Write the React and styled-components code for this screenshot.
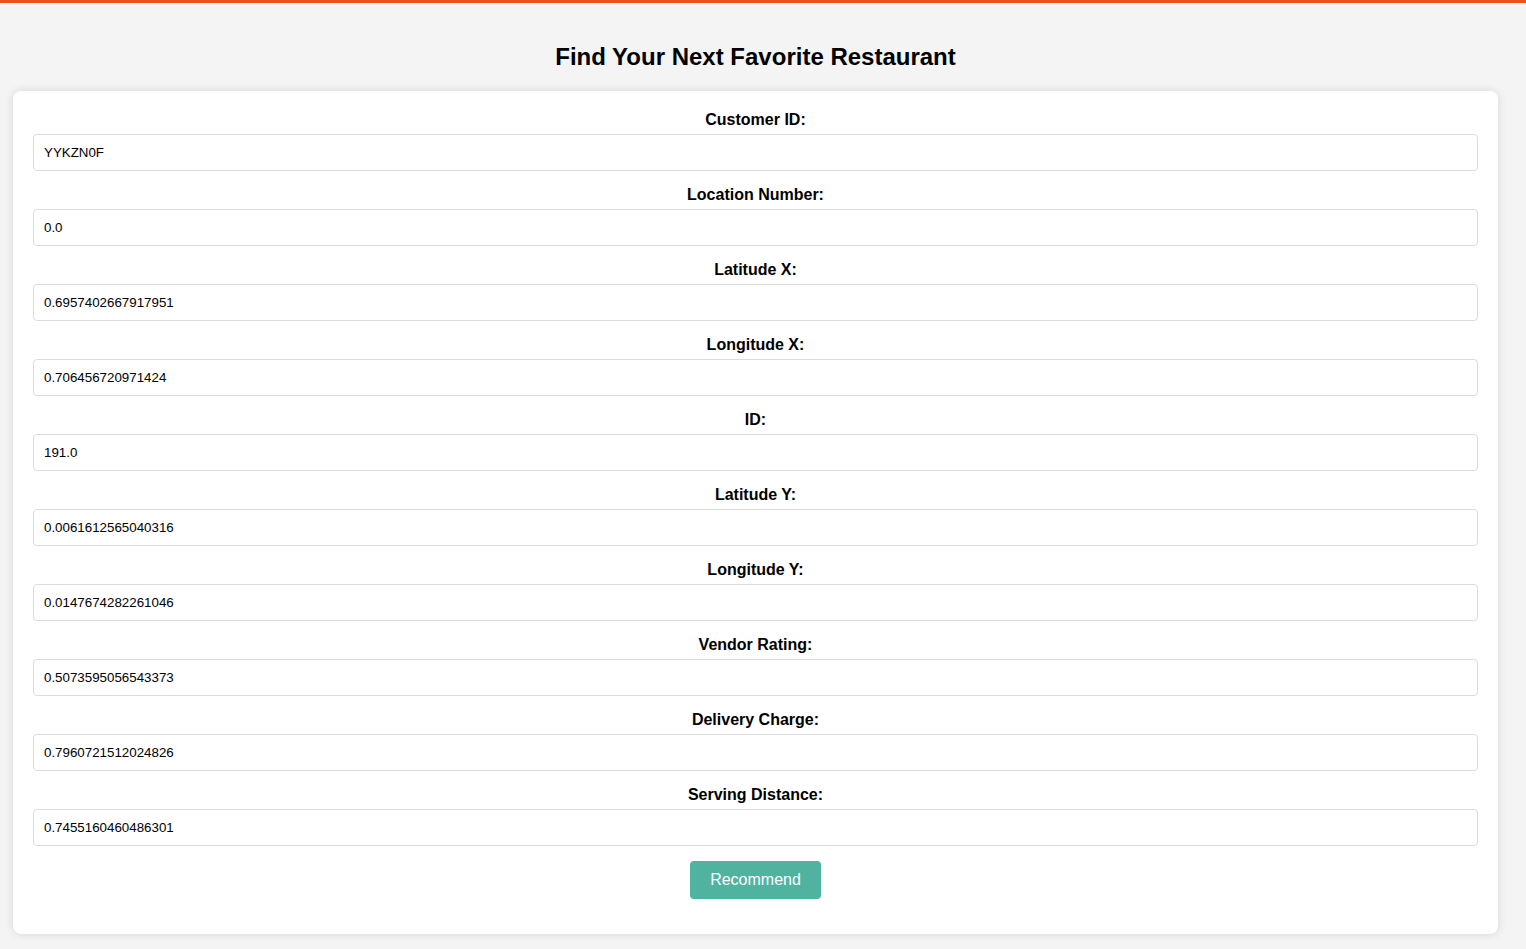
import React from "react";
import styled, { createGlobalStyle } from "styled-components";

const Global = createGlobalStyle`
  html, body { margin: 0; padding: 0; }
  body {
    background: #f4f4f4;
    border-top: 3px solid #f04e23;
    font-family: "Liberation Sans", Arial, sans-serif;
    color: #000;
  }
  * { box-sizing: border-box; }
`;

const Page = styled.div`
  padding: 0 28px 15px 13px;
`;

const Title = styled.h1`
  margin: 0;
  padding-top: 40px;
  height: 88px;
  font-size: 24px;
  line-height: 28px;
  font-weight: bold;
  text-align: center;
`;

const Card = styled.form`
  background: #fff;
  border-radius: 8px;
  box-shadow: 0 0 10px rgba(0, 0, 0, 0.12);
  padding: 20px 20px 35px;
  display: flex;
  flex-direction: column;
  align-items: stretch;
`;

const Field = styled.div`
  display: flex;
  flex-direction: column;
  margin-bottom: 15px;
`;

const Label = styled.label`
  display: block;
  text-align: center;
  font-weight: bold;
  font-size: 16px;
  line-height: 18px;
  margin-bottom: 5px;
`;

const Input = styled.input`
  height: 37px;
  border: 1px solid #dcdcdc;
  border-radius: 4px;
  padding: 0 10px;
  font-family: "Liberation Sans", Arial, sans-serif;
  font-size: 13.333px;
  color: #000;
  background: #fff;
  outline: none;
`;

const Button = styled.button`
  align-self: center;
  background: #4fb3a0;
  color: #fff;
  border: none;
  border-radius: 4px;
  padding: 10px 20px;
  font-family: "Liberation Sans", Arial, sans-serif;
  font-size: 16px;
  line-height: 18px;
  cursor: pointer;
`;

const fields = [
  ["Customer ID:", "YYKZN0F"],
  ["Location Number:", "0.0"],
  ["Latitude X:", "0.6957402667917951"],
  ["Longitude X:", "0.706456720971424"],
  ["ID:", "191.0"],
  ["Latitude Y:", "0.0061612565040316"],
  ["Longitude Y:", "0.0147674282261046"],
  ["Vendor Rating:", "0.5073595056543373"],
  ["Delivery Charge:", "0.7960721512024826"],
  ["Serving Distance:", "0.7455160460486301"],
];

export default function App() {
  return (
    <>
      <Global />
      <Page>
        <Title>Find Your Next Favorite Restaurant</Title>
        <Card onSubmit={(e) => e.preventDefault()}>
          {fields.map(([label, value], i) => (
            <Field key={label}>
              <Label htmlFor={`f${i}`}>{label}</Label>
              <Input id={`f${i}`} defaultValue={value} />
            </Field>
          ))}
          <Button type="submit">Recommend</Button>
        </Card>
      </Page>
    </>
  );
}
